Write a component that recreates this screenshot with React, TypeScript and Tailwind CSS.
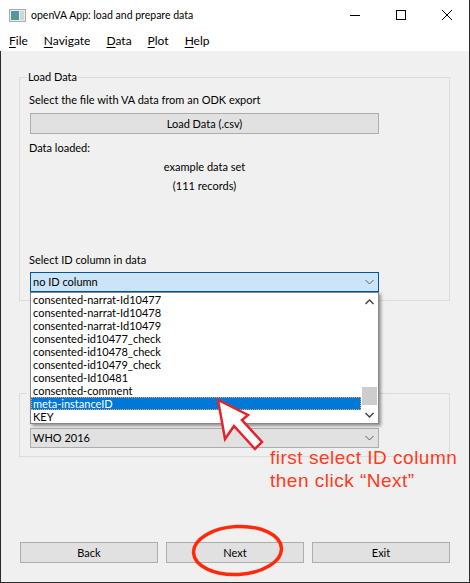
import React from "react";

const ids = [
  "consented-narrat-Id10477",
  "consented-narrat-Id10478",
  "consented-narrat-Id10479",
  "consented-id10477_check",
  "consented-id10478_check",
  "consented-id10479_check",
  "consented-Id10481",
  "consented-comment",
  "meta-instanceID",
  "KEY",
];

function Chevron({ up = false, dark = false }: { up?: boolean; dark?: boolean }) {
  const color = dark ? "#404040" : "#606060";
  return (
    <svg width="9" height="6" viewBox="0 0 9 6">
      {up ? (
        <path d="M0.5 5 L4.5 1 L8.5 5" fill="none" stroke={color} strokeWidth={dark ? 1.4 : 1} />
      ) : (
        <path d="M0.5 1 L4.5 5 L8.5 1" fill="none" stroke={color} strokeWidth={dark ? 1.4 : 1} />
      )}
    </svg>
  );
}

function AppIcon() {
  return (
    <svg width="17" height="13" viewBox="0 0 17 13">
      <defs>
        <linearGradient id="ico" x1="0" y1="0" x2="0" y2="1">
          <stop offset="0" stopColor="#5a8fb8" />
          <stop offset="1" stopColor="#4fa07a" />
        </linearGradient>
      </defs>
      <rect x="0.5" y="0.5" width="16" height="12" fill="#e8ecee" stroke="#a8adb0" />
      <rect x="2" y="2" width="8" height="9" fill="url(#ico)" />
      <rect x="11" y="2" width="4" height="9" fill="#cfd6da" />
    </svg>
  );
}

function Button({ label, wide = false }: { label: string; wide?: boolean }) {
  return (
    <div
      className={`flex h-[21px] items-center justify-center border border-[#adadad] bg-[#e1e1e1] ${
        wide ? "w-[349px]" : "w-[138px]"
      }`}
    >
      {label}
    </div>
  );
}

export default function App() {
  const menu = [
    ["F", "ile"],
    ["N", "avigate"],
    ["D", "ata"],
    ["P", "lot"],
    ["H", "elp"],
  ];

  return (
    <div className="relative h-[583px] w-[470px] overflow-hidden bg-[#f0f0f0] font-['Lato','Liberation_Sans',sans-serif] text-[11px] leading-[14px] text-black">
      {/* title bar */}
      <div className="flex h-[30px] items-center border-r border-[#2b2b2b] bg-white text-[10.5px]">
        <div className="ml-[9px] mr-[5px] flex">
          <AppIcon />
        </div>
        <span>openVA App: load and prepare data</span>
        <div className="ml-auto flex h-full">
          <div className="flex w-[46px] items-center justify-center">
            <svg width="10" height="10" viewBox="0 0 10 10">
              <path d="M0 5.5 H10" stroke="#000" strokeWidth="1" />
            </svg>
          </div>
          <div className="flex w-[46px] items-center justify-center">
            <svg width="10" height="10" viewBox="0 0 10 10">
              <rect x="0.5" y="0.5" width="9" height="9" fill="none" stroke="#000" strokeWidth="1" />
            </svg>
          </div>
          <div className="flex w-[45px] items-center justify-center">
            <svg width="10" height="10" viewBox="0 0 10 10">
              <path d="M0 0 L10 10 M10 0 L0 10" stroke="#000" strokeWidth="1" />
            </svg>
          </div>
        </div>
      </div>

      {/* menu bar */}
      <div className="flex h-[21px] items-center border-r border-[#2b2b2b] bg-white pl-[1px] text-[12px]">
        {menu.map(([a, b]) => (
          <span key={a} className="px-2">
            <u className="underline-offset-2">{a}</u>
            {b}
          </span>
        ))}
      </div>

      {/* body */}
      <div className="h-[532px] border-x border-b border-[#2b2b2b] pl-[18px] pt-[26px]">
        {/* Load Data group */}
        <div className="relative h-[224px] w-[431px] border border-[#dcdcdc] pl-[9px] pt-[15px]">
          <span className="absolute left-[7px] top-[-8px] bg-[#f0f0f0] px-[1px]">Load Data</span>
          <div>Select the file with VA data from an ODK export</div>
          <div className="ml-[1px] mt-[6px]">
            <Button label="Load Data (.csv)" wide />
          </div>
          <div className="mt-[7px]">Data loaded:</div>
          <div className="ml-[1px] mt-[5px] w-[349px] text-center">example data set</div>
          <div className="ml-[1px] mt-[5px] w-[349px] text-center">(111 records)</div>
          <div className="mt-[60px]">Select ID column in data</div>
          <div className="ml-[1px] mt-[5px] flex h-[20px] w-[349px] items-center justify-between border border-[#005499] bg-[#cce4f7] pl-[2px] pr-[4px]">
            <span>no ID column</span>
            <Chevron />
          </div>
        </div>

        {/* algorithm group (its title is hidden under the open list) */}
        <div className="relative mt-[92px] h-[64px] w-[431px] border border-[#dcdcdc] pl-[10px] pt-[34px]">
          <div className="absolute left-[7px] top-[-1px] h-[1px] w-[3px] bg-[#f0f0f0]" />
          <div className="flex h-[20px] w-[349px] items-center justify-between border border-[#adadad] bg-[#e1e1e1] pl-[2px] pr-[4px]">
            <span>WHO 2016</span>
            <Chevron />
          </div>
        </div>

        {/* navigation buttons */}
        <div className="ml-[1px] mt-[85px] flex gap-[8px]">
          <Button label="Back" />
          <Button label="Next" />
          <Button label="Exit" />
        </div>
      </div>

      {/* open dropdown list */}
      <div className="absolute left-[30px] top-[292px] flex h-[132px] w-[349px] border border-[#828790] bg-white shadow-[2px_2px_3px_rgba(0,0,0,0.4)]">
        <div className="flex w-[330px] flex-col">
          {ids.map((id) =>
            id === "meta-instanceID" ? (
              <div
                key={id}
                className="h-[13px] overflow-hidden border border-dotted border-[#f6a24a] bg-[#0078d7] pl-[1px] leading-[11px] text-white"
              >
                {id}
              </div>
            ) : (
              <div key={id} className="h-[13px] overflow-hidden pl-[2px] leading-[13px]">
                {id}
              </div>
            )
          )}
        </div>
        <div className="flex w-[17px] flex-col items-center bg-white">
          <div className="flex h-[17px] items-center justify-center">
            <Chevron up dark />
          </div>
          <div className="w-full flex-1 px-[1px]">
            <div className="mt-[77px] h-[18px] w-full bg-[#cdcdcd]" />
          </div>
          <div className="flex h-[17px] items-center justify-center">
            <Chevron dark />
          </div>
        </div>
      </div>

      {/* annotation arrow */}
      <svg className="absolute left-[210px] top-[392px]" width="60" height="62" viewBox="0 0 60 62">
        <polygon
          points="8,8 38,23 32,28 52,50 45,57 24,34 15,47"
          fill="#ffffff"
          stroke="#e8212b"
          strokeWidth="2.5"
          strokeLinejoin="miter"
        />
      </svg>

      {/* annotation text */}
      <div className="absolute left-[270px] top-[446px] font-['Liberation_Sans',sans-serif] text-[19px] leading-[23px] tracking-[0.5px] text-[#ff3b1d]">
        <div>first select ID column</div>
        <div>then click “Next”</div>
      </div>

      {/* circle around Next */}
      <svg className="absolute left-[188px] top-[521px]" width="100" height="60" viewBox="0 0 100 60">
        <ellipse
          cx="49.5"
          cy="29.5"
          rx="44"
          ry="24"
          fill="none"
          stroke="#ff2a0a"
          strokeWidth="3.5"
          transform="rotate(-3 49.5 29.5)"
        />
      </svg>
    </div>
  );
}
